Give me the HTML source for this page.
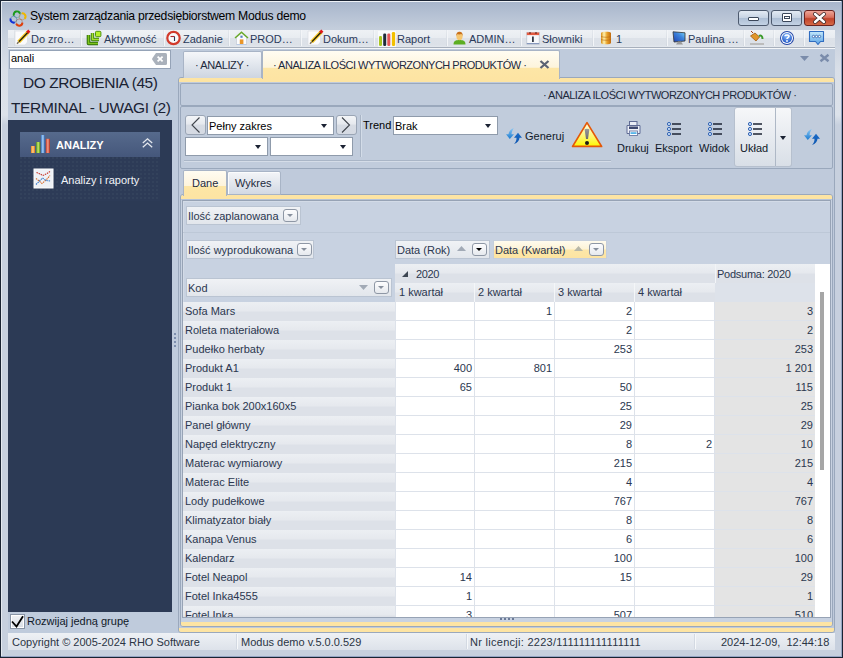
<!DOCTYPE html>
<html><head><meta charset="utf-8">
<style>
*{margin:0;padding:0;box-sizing:border-box}
html,body{width:843px;height:658px;overflow:hidden}
body{position:relative;background:#c3cfdf;font-family:"Liberation Sans",sans-serif;font-size:11px;color:#1e2a3c}
.a{position:absolute}
.t{position:absolute;white-space:nowrap;line-height:1}
svg{position:absolute;overflow:visible}
.rh{left:0;width:212px;height:19px;background:linear-gradient(#eceff3,#e6e9ee 45%,#dde1e8 55%,#dde1e8)}
.gt{color:#2b374f}
.tb{color:#2b3a5a}
.cb{position:absolute;background:#fff;border:1px solid #8f9bab}
.arr{position:absolute;width:0;height:0;border-left:3.5px solid transparent;border-right:3.5px solid transparent;border-top:4px solid #1b2233}
.nb{position:absolute;width:21px;height:20px;border:1px solid #9aa5b5;border-radius:3px;background:linear-gradient(#f3f5f8,#e6e9ee 45%,#d7dce4 50%,#d5dae3)}

.fb{position:absolute;height:19px;background:linear-gradient(#f0f2f5,#e2e6ec);border:1px solid #bac4d2}
.fbtn{position:absolute;width:15px;height:13px;border:1px solid #8e97a5;border-radius:3px;background:linear-gradient(#fdfdfe,#e6e9ee)}
.dk:after{border-top-color:#000 !important}
.fbtn:after{content:"";position:absolute;left:3px;top:4px;border-left:3.5px solid transparent;border-right:3.5px solid transparent;border-top:3.5px solid #87909d}


</style></head><body>
<!-- window frame -->
<div class="a" style="left:0;top:0;width:843px;height:658px;background:linear-gradient(#a7b5cb 0,#c4cedc 28px,#d9dfe8 68px,#dce2ea 114px,#c7d0de 124px,#c7d0de 100%);border:1px solid #1a2332"></div>
<div class="a" style="left:841px;top:1px;width:1px;height:656px;background:#95a5c4"></div>
<div class="a" style="left:1px;top:656px;width:841px;height:1px;background:#95a5c4"></div>
<div class="a" style="left:1px;top:1px;width:840px;height:1px;background:#eef2f7"></div>
<div class="a" style="left:1px;top:1px;width:1px;height:655px;background:#e4e9f0"></div>

<!-- title -->
<div class="t" style="left:30px;top:10.3px;font-size:12.2px;letter-spacing:-0.27px;color:#000">System zarządzania przedsiębiorstwem Modus demo</div>

<!-- toolbar -->
<div class="a" style="left:8px;top:30px;width:827px;height:17px;background:linear-gradient(#eef1f5 0,#e8ecf1 47%,#dde2e9 49%,#dce1e8 88%,#e4e8ee 100%)"></div>
<div class="a" style="left:8px;top:47px;width:827px;height:1px;background:#a8b0bc"></div>
<div class="a" style="left:8px;top:48px;width:827px;height:1px;background:#f4f6f9"></div>

<!-- logo -->
<svg style="left:8px;top:8px" width="20" height="20" viewBox="0 0 20 20">
<circle cx="9" cy="6.6" r="3.2" fill="none" stroke="#3a9a7a" stroke-width="0.7" opacity="0.6"/>
<circle cx="14.3" cy="8.6" r="3.2" fill="none" stroke="#b07a30" stroke-width="0.7" opacity="0.6"/>
<circle cx="11.2" cy="14.2" r="3.2" fill="none" stroke="#a05030" stroke-width="0.7" opacity="0.6"/>
<circle cx="5.6" cy="11.4" r="3.2" fill="none" stroke="#2a6a9a" stroke-width="0.7" opacity="0.6"/>
<path d="M5.9 7.6A3.2 3.2 0 0 1 12 5.6" fill="none" stroke="#1a9a1a" stroke-width="2"/>
<path d="M13.8 5.4A3.2 3.2 0 0 1 16.6 10.8" fill="none" stroke="#f0b800" stroke-width="2"/>
<path d="M14.4 14.6A3.2 3.2 0 0 1 8.2 15.6" fill="none" stroke="#e0400c" stroke-width="2"/>
<path d="M6.8 14.4A3.2 3.2 0 0 1 2.6 10.6" fill="none" stroke="#1030d8" stroke-width="2"/>
</svg>
<!-- window buttons -->
<div class="a" style="left:738px;top:10px;width:31px;height:16px;border:1px solid #4d5a6e;border-radius:3px;background:linear-gradient(#e3eaf3,#c6d3e3 50%,#aebfd5 52%,#c3d2e4)"></div>
<div class="a" style="left:748px;top:17px;width:11px;height:4px;background:#fff;border:1px solid #3b475a;border-radius:1px"></div>
<div class="a" style="left:771px;top:10px;width:31px;height:16px;border:1px solid #4d5a6e;border-radius:3px;background:linear-gradient(#e3eaf3,#c6d3e3 50%,#aebfd5 52%,#c3d2e4)"></div>
<div class="a" style="left:782px;top:13px;width:10px;height:9px;background:#fff;border:1px solid #3b475a;border-radius:1px"></div>
<div class="a" style="left:784px;top:16px;width:6px;height:3px;border:1px solid #3b475a"></div>
<div class="a" style="left:804px;top:10px;width:31px;height:16px;border:1px solid #6b2320;border-radius:3px;background:linear-gradient(#eea598,#d9705e 45%,#c0432c 55%,#d66a47)"></div>
<svg style="left:812px;top:12px" width="15" height="12" viewBox="0 0 15 12"><path d="M3 2L12 10M12 2L3 10" stroke="#3a2a2a" stroke-width="4" stroke-linecap="round"/><path d="M3 2L12 10M12 2L3 10" stroke="#fff" stroke-width="2.4" stroke-linecap="round"/></svg>

<!-- toolbar separators -->
<div class="a" style="left:14px;top:30px;width:1px;height:16px;background:linear-gradient(#e4e8ed,#d2d8e0)"></div>
<div class="a" style="left:80px;top:30px;width:1px;height:16px;background:linear-gradient(#e4e8ed,#d2d8e0)"></div><div class="a" style="left:81px;top:30px;width:1px;height:16px;background:#f3f5f8"></div>
<div class="a" style="left:163px;top:30px;width:1px;height:16px;background:linear-gradient(#e4e8ed,#d2d8e0)"></div><div class="a" style="left:164px;top:30px;width:1px;height:16px;background:#f3f5f8"></div>
<div class="a" style="left:228px;top:30px;width:1px;height:16px;background:linear-gradient(#e4e8ed,#d2d8e0)"></div><div class="a" style="left:229px;top:30px;width:1px;height:16px;background:#f3f5f8"></div>
<div class="a" style="left:300px;top:30px;width:1px;height:16px;background:linear-gradient(#e4e8ed,#d2d8e0)"></div><div class="a" style="left:301px;top:30px;width:1px;height:16px;background:#f3f5f8"></div>
<div class="a" style="left:373px;top:30px;width:1px;height:16px;background:linear-gradient(#e4e8ed,#d2d8e0)"></div><div class="a" style="left:374px;top:30px;width:1px;height:16px;background:#f3f5f8"></div>
<div class="a" style="left:446px;top:30px;width:1px;height:16px;background:linear-gradient(#e4e8ed,#d2d8e0)"></div><div class="a" style="left:447px;top:30px;width:1px;height:16px;background:#f3f5f8"></div>
<div class="a" style="left:520px;top:30px;width:1px;height:16px;background:linear-gradient(#e4e8ed,#d2d8e0)"></div><div class="a" style="left:521px;top:30px;width:1px;height:16px;background:#f3f5f8"></div>
<div class="a" style="left:592px;top:30px;width:1px;height:16px;background:linear-gradient(#e4e8ed,#d2d8e0)"></div><div class="a" style="left:593px;top:30px;width:1px;height:16px;background:#f3f5f8"></div>
<div class="a" style="left:666px;top:30px;width:1px;height:16px;background:linear-gradient(#e4e8ed,#d2d8e0)"></div><div class="a" style="left:667px;top:30px;width:1px;height:16px;background:#f3f5f8"></div>
<div class="a" style="left:743px;top:30px;width:1px;height:16px;background:linear-gradient(#e4e8ed,#d2d8e0)"></div><div class="a" style="left:744px;top:30px;width:1px;height:16px;background:#f3f5f8"></div>
<div class="a" style="left:773px;top:30px;width:1px;height:16px;background:linear-gradient(#e4e8ed,#d2d8e0)"></div><div class="a" style="left:774px;top:30px;width:1px;height:16px;background:#f3f5f8"></div>
<div class="a" style="left:803px;top:30px;width:1px;height:16px;background:linear-gradient(#e4e8ed,#d2d8e0)"></div><div class="a" style="left:804px;top:30px;width:1px;height:16px;background:#f3f5f8"></div>

<div class="t tb" style="left:31px;top:34px">Do zro…</div>
<div class="t tb" style="left:104px;top:34px">Aktywność</div>
<div class="t tb" style="left:183px;top:34px">Zadanie</div>
<div class="t tb" style="left:250px;top:34px">PROD…</div>
<div class="t tb" style="left:323px;top:34px">Dokum…</div>
<div class="t tb" style="left:397px;top:34px">Raport</div>
<div class="t tb" style="left:469px;top:34px">ADMIN…</div>
<div class="t tb" style="left:542px;top:34px">Słowniki</div>
<div class="t tb" style="left:616px;top:34px">1</div>
<div class="t tb" style="left:688px;top:34px">Paulina …</div>
<!-- toolbar icons -->
<svg style="left:14px;top:29px" width="16" height="16" viewBox="0 0 16 16">
<path d="M1 2H13.5V13L11 16H1Z" fill="#fbfbfc" stroke="#dadde2" stroke-width="0.7"/>
<path d="M4.6 13L14.2 3" stroke="#f5c623" stroke-width="3.6"/>
<path d="M5 12.6L14 3.2" stroke="#1a1a10" stroke-width="1.3"/>
<path d="M13.2 3.7L15.4 1.6" stroke="#e01818" stroke-width="3"/>
<path d="M3 14.8L4.6 13" stroke="#7a7060" stroke-width="1.5"/>
</svg>
<svg style="left:86px;top:31px" width="16" height="15" viewBox="0 0 16 15">
<path d="M2.5 4V12.5H12" fill="none" stroke="#2f6e0a" stroke-width="3.6" stroke-linejoin="round"/>
<path d="M2.5 4V12.5H12" fill="none" stroke="#7ec41c" stroke-width="1.6"/>
<path d="M6.5 2V8.5H13" fill="none" stroke="#3d8010" stroke-width="3.4" stroke-linejoin="round"/>
<path d="M6.5 2V8.5H13" fill="none" stroke="#a6e030" stroke-width="1.5"/>
<rect x="9.5" y="0.3" width="5.4" height="5.4" rx="1" fill="#b6ef2a" stroke="#4d8e12" stroke-width="1"/>
</svg>
<svg style="left:166px;top:31px" width="15" height="15" viewBox="0 0 15 15">
<circle cx="7.5" cy="7" r="6.2" fill="#f7f9fb" stroke="#d23a2c" stroke-width="2.2"/>
<path d="M4.5 5.5H8.5" stroke="#b0242a" stroke-width="1.1"/><path d="M8.5 5.5V10" stroke="#2c3550" stroke-width="1.1"/>
</svg>
<svg style="left:234px;top:31px" width="15" height="15" viewBox="0 0 15 15">
<path d="M2.5 6.5V13.5H12.5V6.5L7.5 2Z" fill="#fbfcfe" stroke="#c9cdd6" stroke-width="0.8"/>
<path d="M1 7L7.5 1.2L14 7" fill="none" stroke="#6aaa2a" stroke-width="1.5"/>
<rect x="5.8" y="8.4" width="3.6" height="5.2" fill="#e9962a"/>
<rect x="6.4" y="4.6" width="2.2" height="2.2" fill="#5a7fc0"/>
<path d="M2.5 13.5H12.5" stroke="#b9cbe6" stroke-width="1"/>
</svg>
<svg style="left:307px;top:29px" width="16" height="16" viewBox="0 0 16 16">
<path d="M1 2H13.5V13L11 16H1Z" fill="#fbfbfc" stroke="#dadde2" stroke-width="0.7"/>
<path d="M4.6 13L14.2 3" stroke="#f5c623" stroke-width="3.6"/>
<path d="M5 12.6L14 3.2" stroke="#1a1a10" stroke-width="1.3"/>
<path d="M13.2 3.7L15.4 1.6" stroke="#e01818" stroke-width="3"/>
<path d="M3 14.8L4.6 13" stroke="#7a7060" stroke-width="1.5"/>
</svg>
<svg style="left:378px;top:31px" width="18" height="16" viewBox="0 0 18 16">
<rect x="0" y="0" width="18" height="16" fill="#fff" opacity="0.7"/>
<rect x="1" y="5" width="3" height="10" rx="1.2" fill="#a9c620"/>
<rect x="5.2" y="2.5" width="3" height="12.5" rx="1.2" fill="#1f2b3a"/>
<rect x="9.3" y="2.5" width="3" height="12.5" rx="1.2" fill="#e5575a"/>
<rect x="13.9" y="1" width="3.2" height="14" rx="1.2" fill="#f2c000"/>
</svg>
<svg style="left:452px;top:31px" width="15" height="15" viewBox="0 0 15 15">
<path d="M1.5 13.5C1.5 9.5 4.5 9 7.5 9S13.5 9.5 13.5 13.5Z" fill="#5cae22"/>
<ellipse cx="7.5" cy="5.3" rx="3.1" ry="4" fill="#f6c771"/>
<path d="M4.4 5C4.2 1.5 6 0.8 7.5 0.8S10.8 1.5 10.6 5L9.5 3C8 3.5 6 3.5 5.5 3Z" fill="#c8701c"/>
</svg>
<svg style="left:526px;top:31px" width="14" height="14" viewBox="0 0 14 14">
<rect x="0.8" y="1.5" width="12.4" height="11.7" fill="#f6f8fb" stroke="#b8c0cc" stroke-width="0.7"/>
<rect x="0.8" y="1.5" width="12.4" height="2.6" fill="#e35a40"/>
<path d="M4 1V3M10 1V3" stroke="#6a2a20" stroke-width="1.2"/>
<rect x="6" y="5.5" width="1.8" height="5.5" fill="#333b48"/>
<path d="M0.8 12.6H13.2" stroke="#7b8fb8" stroke-width="1"/>
</svg>
<svg style="left:600px;top:31px" width="12" height="14" viewBox="0 0 12 14">
<defs><linearGradient id="gold" x1="0" x2="1"><stop offset="0" stop-color="#d58a12"/><stop offset="0.3" stop-color="#fff3b0"/><stop offset="0.6" stop-color="#e9a22a"/><stop offset="1" stop-color="#c06a10"/></linearGradient></defs>
<path d="M1 2C1 0.3 11 0.3 11 2V12C11 13.8 1 13.8 1 12Z" fill="url(#gold)"/>
<path d="M1 5.5C4 6.5 8 6.5 11 5.5M1 8.5C4 9.5 8 9.5 11 8.5" stroke="#b86a10" stroke-width="0.6" fill="none"/>
</svg>
<svg style="left:672px;top:31px" width="14" height="14" viewBox="0 0 14 14">
<defs><linearGradient id="scr" x1="0" y1="1" x2="1" y2="0"><stop offset="0" stop-color="#1e3fb0"/><stop offset="0.6" stop-color="#3f86dd"/><stop offset="1" stop-color="#7fd8f8"/></linearGradient></defs>
<path d="M1 0.8L13 1.8V10L2 11Z" fill="url(#scr)" stroke="#333" stroke-width="0.8"/>
<path d="M4 13.5L6 10.5H9L11 13.5Z" fill="#9a9a9a"/>
</svg>
<svg style="left:749px;top:31px" width="16" height="14" viewBox="0 0 16 14">
<path d="M1.5 5L6 2L10.5 6L7 10Z" fill="#e0962a" stroke="#a35a12" stroke-width="0.8"/>
<path d="M4 2L2 0" stroke="#a33a12" stroke-width="1"/>
<path d="M10 5C12 4 13.5 5 13.5 8" stroke="#3a9a2a" stroke-width="2" fill="none"/>
<rect x="1" y="12" width="14" height="2" fill="#bcbcbc"/>
</svg>
<svg style="left:779px;top:30px" width="16" height="16" viewBox="0 0 16 16">
<defs><radialGradient id="hb" cx="0.5" cy="0.3" r="0.7"><stop offset="0" stop-color="#8fc0ff"/><stop offset="1" stop-color="#1f55c4"/></radialGradient></defs>
<circle cx="8" cy="8" r="7" fill="#2346a8"/>
<circle cx="8" cy="8" r="6" fill="#fff"/>
<circle cx="8" cy="8" r="5" fill="url(#hb)"/>
<path d="M6 6.2C6 4.6 10 4.6 10 6.3C10 7.6 8 7.6 8 9" stroke="#fff" stroke-width="1.6" fill="none"/>
<circle cx="8" cy="11" r="0.9" fill="#fff"/>
</svg>
<svg style="left:808px;top:30px" width="17" height="16" viewBox="0 0 17 16">
<defs><linearGradient id="cg" x1="0" y1="0" x2="0" y2="1"><stop offset="0" stop-color="#c4e8fb"/><stop offset="1" stop-color="#5aa4e6"/></linearGradient></defs>
<path d="M1.5 1.5H15.5V11.5H12.5L10 14.5L7.5 11.5H1.5Z" fill="url(#cg)" stroke="#2f6cc0" stroke-width="1.1" stroke-linejoin="round"/>
<circle cx="5.5" cy="6.5" r="1.2" fill="#fff" stroke="#2a5ca8" stroke-width="0.8"/>
<circle cx="8.5" cy="6.5" r="1.2" fill="#fff" stroke="#2a5ca8" stroke-width="0.8"/>
<circle cx="11.5" cy="6.5" r="1.2" fill="#fff" stroke="#2a5ca8" stroke-width="0.8"/>
</svg>
<!-- body bg -->
<div class="a" style="left:8px;top:49px;width:827px;height:584px;background:#bfcbdc"></div>

<!-- LEFT PANEL -->
<div class="a" style="left:9px;top:50px;width:162px;height:19px;background:#fff;border:1px solid #95a3b7"></div>
<div class="t" style="left:11px;top:53px;color:#000">anali</div>
<svg style="left:152px;top:53px" width="15" height="12" viewBox="0 0 15 12"><path d="M4 0H13.5Q15 0 15 1.5V10.5Q15 12 13.5 12H4L0.3 6.8Q0 6 0.3 5.2Z" fill="#aab1bb"/><path d="M5.6 3.6L10.6 8.4M10.6 3.6L5.6 8.4" stroke="#fff" stroke-width="1.8"/></svg>
<div class="t" style="left:23px;top:75px;font-size:15.5px;letter-spacing:-0.45px;color:#1a2233">DO ZROBIENIA (45)</div>
<div class="t" style="left:11px;top:100px;font-size:15.5px;letter-spacing:-0.36px;color:#1a2233">TERMINAL - UWAGI (2)</div>

<div class="a" style="left:8px;top:120px;width:164px;height:492px;background:#2c3a55"></div>
<div class="a" style="left:20px;top:132px;width:140px;height:25px;background:linear-gradient(#566a8c,#45577b)"></div>
<svg style="left:30px;top:134px" width="21" height="20" viewBox="0 0 21 20">
<defs>
<linearGradient id="bo" x1="0" x2="1"><stop offset="0" stop-color="#e8851c"/><stop offset="0.5" stop-color="#ffd08a"/><stop offset="1" stop-color="#d9700e"/></linearGradient>
<linearGradient id="bg" x1="0" x2="1"><stop offset="0" stop-color="#5f9e14"/><stop offset="0.5" stop-color="#c9ea6e"/><stop offset="1" stop-color="#4f8c0c"/></linearGradient>
<linearGradient id="bb" x1="0" x2="1"><stop offset="0" stop-color="#3c74c4"/><stop offset="0.5" stop-color="#a8d4f8"/><stop offset="1" stop-color="#2f5fb0"/></linearGradient>
<linearGradient id="br" x1="0" x2="1"><stop offset="0" stop-color="#c83a2a"/><stop offset="0.5" stop-color="#f5a08a"/><stop offset="1" stop-color="#b02a1a"/></linearGradient>
</defs>
<rect x="1" y="12" width="4" height="7" fill="url(#bo)"/>
<rect x="6.2" y="8" width="4" height="11" fill="url(#bg)"/>
<rect x="11" y="1" width="3.8" height="18" fill="url(#bb)"/>
<rect x="15.9" y="4.8" width="4" height="14.2" fill="url(#br)"/>
</svg>
<div class="t" style="left:56px;top:140px;font-weight:bold;color:#fff;font-size:11px">ANALIZY</div>
<svg style="left:142px;top:138px" width="11" height="10" viewBox="0 0 11 10"><path d="M0.8 5L5.5 0.8L10.2 5M0.8 9.2L5.5 5L10.2 9.2" fill="none" stroke="#e4e8ee" stroke-width="1.3"/></svg>
<div class="a" style="left:20px;top:157px;width:140px;height:44px;background-color:#2d3b57;background-image:radial-gradient(circle at 1px 1px,#33425c 0.8px,transparent 1px);background-size:4px 4px"></div>
<svg style="left:33px;top:168px" width="22" height="22" viewBox="0 0 22 22">
<rect x="0.5" y="0.5" width="20" height="20" fill="#fdfdfe"/>
<rect x="1.5" y="1.5" width="18" height="18" fill="#eef1f6"/>
<path d="M3.5 4.5L6 5.5L10 7.5L14 5.5L17 3.5" fill="none" stroke="#c8352a" stroke-width="1.1" stroke-dasharray="1.5 0.8"/>
<path d="M3 10.5L5.5 12.5L9 15.5L13.5 11.5L17 7.5" fill="none" stroke="#d86a28" stroke-width="1.1" stroke-dasharray="1.5 0.8"/>
<path d="M3 16.5L6 13.5L9.5 10L13 12.5L17.5 13" fill="none" stroke="#3478c8" stroke-width="1.1" stroke-dasharray="1.5 0.8"/>
</svg>
<div class="t" style="left:61px;top:175px;color:#f0f3f8">Analizy i raporty</div>

<div class="a" style="left:10px;top:614px;width:15px;height:15px;background:linear-gradient(#f0f2f5,#d8dde5);border:1px solid #8894a6;box-shadow:inset 0 0 0 1px #fff"></div>
<svg style="left:10px;top:614px" width="15" height="15" viewBox="0 0 15 15"><path d="M2 7.5L6.5 12.5L13 2.3" fill="none" stroke="#000" stroke-width="1.8" stroke-linejoin="miter"/></svg>
<div class="t" style="left:27px;top:616px;color:#0f1828">Rozwijaj jedną grupę</div>

<!-- outer tab frame -->
<div class="a" style="left:178px;top:77px;width:657px;height:556px;background:#bfcadb;border:1px solid #9aa8bc;border-radius:3px"></div>
<div class="a" style="left:179px;top:78px;width:655px;height:4px;background:#fde4a3;border-radius:2px 2px 0 0"></div>
<div class="a" style="left:179px;top:628px;width:655px;height:4px;background:#fde4a3;border-radius:0 0 2px 2px"></div>
<!-- RIGHT TABS -->
<div class="a" style="left:183px;top:51px;width:79px;height:27px;background:linear-gradient(#f5f7fa,#cdd5e0);border:1px solid #a8b4c6;border-bottom:none;border-radius:2px 2px 0 0"></div>
<div class="t" style="left:195px;top:60px;color:#1e2a3c;letter-spacing:-0.4px">· ANALIZY ·</div>
<div class="a" style="left:262px;top:50px;width:298px;height:29px;background:linear-gradient(#fffcf2,#fdf4dc 58%,#fde6a6 62%,#fde4a3);border:1px solid #a8b4c6;border-bottom:none;border-radius:2px 2px 0 0"></div>
<div class="t" style="left:273px;top:60px;color:#1e2a3c;letter-spacing:-0.5px">· ANALIZA ILOŚCI WYTWORZONYCH PRODUKTÓW ·</div>
<svg style="left:539px;top:60px" width="11" height="9" viewBox="0 0 11 9"><path d="M1.5 1L9.5 8M9.5 1L1.5 8" stroke="#5b6373" stroke-width="2.3"/></svg>
<svg style="left:800px;top:56px" width="9" height="5"><path d="M0 0H9L4.5 5Z" fill="#7a8cab"/></svg>
<svg style="left:819px;top:54px" width="11" height="8" viewBox="0 0 11 8"><path d="M1.5 0.8L9.5 7.2M9.5 0.8L1.5 7.2" stroke="#7a8cab" stroke-width="2.4"/></svg>





<!-- header panel -->
<div class="a" style="left:180px;top:83px;width:653px;height:23px;background:#c1ccdc;border:1px solid #9aa8bc;border-radius:2px"></div>

<div class="t" style="left:543px;top:90px;color:#1e2a3c;letter-spacing:-0.5px">· ANALIZA ILOŚCI WYTWORZONYCH PRODUKTÓW ·</div>

<!-- toolbar panel -->
<div class="a" style="left:180px;top:106px;width:653px;height:63px;background:#c1ccdc;border:1px solid #9aa8bc;border-radius:2px"></div>


<!-- analysis toolbar widgets -->
<div class="nb" style="left:185px;top:115px"></div>
<svg style="left:190px;top:116px" width="12" height="18"><path d="M9.5 1.5L2 9L9.5 16.5" fill="none" stroke="#40454c" stroke-width="1.1"/></svg>
<div class="cb" style="left:207px;top:116px;width:127px;height:19px"></div>
<div class="t gt" style="left:209px;top:121px;color:#000">Pełny zakres</div>
<div class="arr" style="left:321px;top:124px"></div>
<div class="nb" style="left:336px;top:115px"></div>
<svg style="left:340px;top:116px" width="12" height="18"><path d="M2 1.5L9.5 9L2 16.5" fill="none" stroke="#40454c" stroke-width="1.1"/></svg>
<div class="cb" style="left:185px;top:137px;width:83px;height:19px"></div>
<div class="arr" style="left:255px;top:145px"></div>
<div class="cb" style="left:270px;top:137px;width:83px;height:19px"></div>
<div class="arr" style="left:340px;top:145px"></div>
<div class="a" style="left:360px;top:115px;width:1px;height:42px;background:#a9b5c6"></div>
<div class="a" style="left:361px;top:115px;width:1px;height:42px;background:#d3dce8"></div>
<div class="t gt" style="left:363px;top:120px;color:#000">Trend</div>
<div class="cb" style="left:393px;top:116px;width:105px;height:19px"></div>
<div class="t gt" style="left:395px;top:121px;color:#000">Brak</div>
<div class="arr" style="left:485px;top:124px"></div>
<div class="a" style="left:184px;top:160px;width:427px;height:1px;background:#aab6c7"></div>
<div class="a" style="left:184px;top:161px;width:427px;height:1px;background:#d5dde8"></div>

<svg style="left:502px;top:124px" width="24" height="24" viewBox="0 0 24 24">
<defs><linearGradient id="rl502" x1="0" y1="0" x2="0" y2="1"><stop offset="0" stop-color="#8cc8f4"/><stop offset="1" stop-color="#1a7ad0"/></linearGradient><linearGradient id="rr502" x1="0" y1="0" x2="0" y2="1"><stop offset="0" stop-color="#1a6cc8"/><stop offset="1" stop-color="#0d55b0"/></linearGradient></defs>
<path d="M11.8 4C9 5 7 7 6.5 10.2L4 10.2L7.8 15L12 10.2L9.5 10.2C9.8 8 10.5 6 11.8 4Z" fill="url(#rl502)"/>
<path d="M16 8.8L20 13.7L17.5 13.7C17.3 16.5 15.5 18.8 12 20C14 18 14.5 16 14.5 13.7L12 13.7Z" fill="url(#rr502)"/>
</svg>
<div class="t gt" style="left:525px;top:131px;color:#101828">Generuj</div>
<svg style="left:571px;top:121px" width="33" height="28" viewBox="0 0 33 28">
<defs><linearGradient id="wy" x1="0" y1="0" x2="0" y2="1"><stop offset="0" stop-color="#fffff0"/><stop offset="0.55" stop-color="#fdf77a"/><stop offset="1" stop-color="#fff800"/></linearGradient><linearGradient id="wx" x1="0" y1="0" x2="0" y2="1"><stop offset="0" stop-color="#9a9a9a"/><stop offset="1" stop-color="#6a6a70"/></linearGradient></defs>
<path d="M16 1.6L1.6 25.4H30.6Z" fill="url(#wy)" stroke="#e45808" stroke-width="1.7" stroke-linejoin="round"/>
<path d="M13.6 8.2Q16 7.4 18.4 8.2L17 18H15Z" fill="url(#wx)"/>
<circle cx="16" cy="22" r="2" fill="#1a1a1a"/>
</svg>

<svg style="left:626px;top:121px" width="15" height="15" viewBox="0 0 15 15">
<rect x="3.5" y="0.5" width="7.5" height="7" fill="#e9edf6" stroke="#5f6b95" stroke-width="1"/>
<path d="M1 4.5H14V12.5H1Z" fill="#eef1f8" stroke="#5f6b95" stroke-width="1" stroke-linejoin="round"/>
<rect x="3" y="5.5" width="9" height="2.5" fill="#3d4870"/>
<rect x="3.5" y="10" width="8" height="4.5" fill="#fff" stroke="#6c78a0" stroke-width="0.9"/>
<rect x="4.5" y="11.2" width="6" height="1.8" fill="#55b5ea"/>
</svg>
<svg style="left:667px;top:122px" width="15" height="14" viewBox="0 0 15 14">
<circle cx="2" cy="2" r="1.6" fill="#c5dcf5" stroke="#3565b5" stroke-width="1"/><circle cx="2" cy="7" r="1.6" fill="#c5dcf5" stroke="#3565b5" stroke-width="1"/><circle cx="2" cy="12" r="1.6" fill="#c5dcf5" stroke="#3565b5" stroke-width="1"/>
<path d="M5 2H14M5 7H14M5 12H14" stroke="#1c2333" stroke-width="1.5"/></svg>
<svg style="left:708px;top:122px" width="15" height="14" viewBox="0 0 15 14">
<circle cx="2" cy="2" r="1.6" fill="#c5dcf5" stroke="#3565b5" stroke-width="1"/><circle cx="2" cy="7" r="1.6" fill="#c5dcf5" stroke="#3565b5" stroke-width="1"/><circle cx="2" cy="12" r="1.6" fill="#c5dcf5" stroke="#3565b5" stroke-width="1"/>
<path d="M5 2H14M5 7H14M5 12H14" stroke="#1c2333" stroke-width="1.5"/></svg>
<div class="t gt" style="left:617px;top:143px;color:#101828">Drukuj</div>
<div class="t gt" style="left:655px;top:143px;color:#101828">Eksport</div>
<div class="t gt" style="left:699px;top:143px;color:#101828">Widok</div>
<div class="a" style="left:734px;top:107px;width:42px;height:60px;border:1px solid #b6c0ce;border-radius:3px 0 0 3px;background:linear-gradient(#f6f7f9,#d9dfe7)"></div>
<div class="a" style="left:776px;top:107px;width:16px;height:60px;border:1px solid #b6c0ce;border-left:none;border-radius:0 3px 3px 0;background:linear-gradient(#f6f7f9,#d9dfe7)"></div>
<div class="a" style="left:775px;top:108px;width:1px;height:58px;background:#aeb8c6"></div>
<div class="arr" style="left:780px;top:136px"></div>
<svg style="left:748px;top:122px" width="15" height="14" viewBox="0 0 15 14">
<circle cx="2" cy="2" r="1.6" fill="#c5dcf5" stroke="#3565b5" stroke-width="1"/><circle cx="2" cy="7" r="1.6" fill="#c5dcf5" stroke="#3565b5" stroke-width="1"/><circle cx="2" cy="12" r="1.6" fill="#c5dcf5" stroke="#3565b5" stroke-width="1"/>
<path d="M5 2H14M5 7H14M5 12H14" stroke="#1c2333" stroke-width="1.5"/></svg>
<div class="t gt" style="left:740px;top:143px;color:#101828">Układ</div>
<svg style="left:800px;top:125px" width="24" height="24" viewBox="0 0 24 24">
<defs><linearGradient id="rl801" x1="0" y1="0" x2="0" y2="1"><stop offset="0" stop-color="#8cc8f4"/><stop offset="1" stop-color="#1a7ad0"/></linearGradient><linearGradient id="rr801" x1="0" y1="0" x2="0" y2="1"><stop offset="0" stop-color="#1a6cc8"/><stop offset="1" stop-color="#0d55b0"/></linearGradient></defs>
<path d="M11.8 4C9 5 7 7 6.5 10.2L4 10.2L7.8 15L12 10.2L9.5 10.2C9.8 8 10.5 6 11.8 4Z" fill="url(#rl801)"/>
<path d="M16 8.8L20 13.7L17.5 13.7C17.3 16.5 15.5 18.8 12 20C14 18 14.5 16 14.5 13.7L12 13.7Z" fill="url(#rr801)"/>
</svg>
<!-- inner tab frame -->
<div class="a" style="left:180px;top:194px;width:653px;height:433px;background:#c8d2e1;border:1px solid #9aa8bc;border-radius:3px"></div>
<div class="a" style="left:181px;top:195px;width:651px;height:4px;background:#fde4a3;border-radius:2px 2px 0 0"></div>
<div class="a" style="left:181px;top:199px;width:651px;height:1px;background:#b5c3d9"></div>
<div class="a" style="left:181px;top:622px;width:651px;height:4px;background:#fde4a3;border-radius:0 0 2px 2px"></div>



<div class="a" style="left:182px;top:200px;width:649px;height:418px;border:1px solid #97a3b5;box-shadow:inset 1px 1px 0 #d3dbe7"></div>
<!-- Dane / Wykres tabs -->
<div class="a" style="left:183px;top:170px;width:44px;height:26px;background:linear-gradient(#fffcf2,#fdf4dc 58%,#fde6a6 62%,#fde4a3);border:1px solid #a8b4c6;border-bottom:none;border-radius:2px 2px 0 0"></div>
<div class="t" style="left:192px;top:178px">Dane</div>
<div class="a" style="left:227px;top:171px;width:54px;height:24px;background:linear-gradient(#f3f5f8,#d2d9e3);border:1px solid #a8b4c6;border-radius:2px 2px 0 0;box-shadow:inset 1px 1px 0 #fbfcfd"></div>
<div class="t" style="left:235px;top:178px">Wykres</div>


<!-- grid panel -->




<!-- field boxes -->
<div class="fb" style="left:186px;top:206px;width:115px"></div>
<div class="t gt" style="left:188px;top:211px">Ilość zaplanowana</div>
<div class="fbtn" style="left:283px;top:209px"></div>
<div class="a" style="left:183px;top:232px;width:647px;height:1px;background:#bdc8d7"></div>
<div class="fb" style="left:186px;top:240px;width:128px"></div>
<div class="t gt" style="left:188px;top:245px">Ilość wyprodukowana</div>
<div class="fbtn" style="left:297px;top:243px"></div>
<div class="fb" style="left:186px;top:278px;width:206px;height:19px"></div>
<div class="t gt" style="left:188px;top:283px">Kod</div>
<svg style="left:359px;top:285px" width="9" height="5"><path d="M0 0H9L4.5 5Z" fill="#a2aab6"/></svg>
<div class="fbtn" style="left:374px;top:281px"></div>
<div class="fb" style="left:395px;top:240px;width:95px"></div>
<div class="t gt" style="left:397px;top:245px">Data (Rok)</div>
<svg style="left:457px;top:246px" width="9" height="5"><path d="M0 5H9L4.5 0Z" fill="#a2aab6"/></svg>
<div class="fbtn dk" style="left:472px;top:243px"></div>
<div class="fb" style="left:493px;top:240px;width:114px;background:linear-gradient(#fffbee,#fdf3d6 48%,#fde7a8 52%,#fde4a2);border-color:#c5cedb"></div>
<div class="t gt" style="left:495px;top:245px">Data (Kwartał)</div>
<svg style="left:574px;top:246px" width="9" height="5"><path d="M0 5H9L4.5 0Z" fill="#b7b7a8"/></svg>
<div class="fbtn" style="left:589px;top:243px"></div>
<!-- grid header -->
<div class="a" style="left:395px;top:264px;width:320px;height:19px;background:linear-gradient(#eceff3,#e6e9ee 45%,#dde1e8 55%,#dde1e8)"></div>
<div class="a" style="left:395px;top:283px;width:320px;height:19px;background:linear-gradient(#eceff3,#e6e9ee 45%,#dde1e8 55%,#dde1e8)"></div>
<div class="a" style="left:474px;top:283px;width:1px;height:19px;background:#f4f6f8"></div>
<div class="a" style="left:554px;top:283px;width:1px;height:19px;background:#f4f6f8"></div>
<div class="a" style="left:634px;top:283px;width:1px;height:19px;background:#f4f6f8"></div>
<div class="a" style="left:715px;top:264px;width:100px;box-shadow:inset 1px 0 0 #f2f4f7;height:19px;background:linear-gradient(#eceff3,#e6e9ee 45%,#dde1e8 55%,#dde1e8)"></div>
<div class="a" style="left:715px;top:283px;width:100px;height:19px;background:#dde2ea"></div>
<div class="a" style="left:815px;top:264px;width:15px;height:353px;background:#fff"></div>

<div class="t gt" style="left:416px;top:269px;letter-spacing:-0.4px">2020</div>
<div class="t gt" style="left:399px;top:287px">1 kwartał</div>
<div class="t gt" style="left:478px;top:287px">2 kwartał</div>
<div class="t gt" style="left:558px;top:287px">3 kwartał</div>
<div class="t gt" style="left:638px;top:287px">4 kwartał</div>
<div class="t gt" style="left:717px;top:269px;letter-spacing:-0.26px">Podsuma: 2020</div>
<svg style="left:402px;top:271px" width="6" height="6"><path d="M6 0V6H0Z" fill="#3d4652"/></svg>
<div class="a" style="left:183px;top:302px;width:647px;height:315px;overflow:hidden">
<div class="a" style="left:212px;top:0;width:435px;height:316px;background:#fff"></div>
<div class="a" style="left:531px;top:0;width:101px;height:316px;background:#e4e4e4"></div>
<div class="a rh" style="top:0px"></div>
<div class="t gt" style="left:2px;top:4px">Sofa Mars</div>
<div class="t gt" style="right:278px;top:4px">1</div>
<div class="t gt" style="right:198px;top:4px">2</div>
<div class="t gt" style="right:17px;top:4px">3</div>
<div class="a rh" style="top:19px"></div>
<div class="t gt" style="left:2px;top:23px">Roleta materiałowa</div>
<div class="t gt" style="right:198px;top:23px">2</div>
<div class="t gt" style="right:17px;top:23px">2</div>
<div class="a rh" style="top:38px"></div>
<div class="t gt" style="left:2px;top:42px">Pudełko herbaty</div>
<div class="t gt" style="right:198px;top:42px">253</div>
<div class="t gt" style="right:17px;top:42px">253</div>
<div class="a rh" style="top:57px"></div>
<div class="t gt" style="left:2px;top:61px">Produkt A1</div>
<div class="t gt" style="right:358px;top:61px">400</div>
<div class="t gt" style="right:278px;top:61px">801</div>
<div class="t gt" style="right:17px;top:61px">1 201</div>
<div class="a rh" style="top:76px"></div>
<div class="t gt" style="left:2px;top:80px">Produkt 1</div>
<div class="t gt" style="right:358px;top:80px">65</div>
<div class="t gt" style="right:198px;top:80px">50</div>
<div class="t gt" style="right:17px;top:80px">115</div>
<div class="a rh" style="top:95px"></div>
<div class="t gt" style="left:2px;top:99px">Pianka bok 200x160x5</div>
<div class="t gt" style="right:198px;top:99px">25</div>
<div class="t gt" style="right:17px;top:99px">25</div>
<div class="a rh" style="top:114px"></div>
<div class="t gt" style="left:2px;top:118px">Panel główny</div>
<div class="t gt" style="right:198px;top:118px">29</div>
<div class="t gt" style="right:17px;top:118px">29</div>
<div class="a rh" style="top:133px"></div>
<div class="t gt" style="left:2px;top:137px">Napęd elektryczny</div>
<div class="t gt" style="right:198px;top:137px">8</div>
<div class="t gt" style="right:118px;top:137px">2</div>
<div class="t gt" style="right:17px;top:137px">10</div>
<div class="a rh" style="top:152px"></div>
<div class="t gt" style="left:2px;top:156px">Materac wymiarowy</div>
<div class="t gt" style="right:198px;top:156px">215</div>
<div class="t gt" style="right:17px;top:156px">215</div>
<div class="a rh" style="top:171px"></div>
<div class="t gt" style="left:2px;top:175px">Materac Elite</div>
<div class="t gt" style="right:198px;top:175px">4</div>
<div class="t gt" style="right:17px;top:175px">4</div>
<div class="a rh" style="top:190px"></div>
<div class="t gt" style="left:2px;top:194px">Lody pudełkowe</div>
<div class="t gt" style="right:198px;top:194px">767</div>
<div class="t gt" style="right:17px;top:194px">767</div>
<div class="a rh" style="top:209px"></div>
<div class="t gt" style="left:2px;top:213px">Klimatyzator biały</div>
<div class="t gt" style="right:198px;top:213px">8</div>
<div class="t gt" style="right:17px;top:213px">8</div>
<div class="a rh" style="top:228px"></div>
<div class="t gt" style="left:2px;top:232px">Kanapa Venus</div>
<div class="t gt" style="right:198px;top:232px">6</div>
<div class="t gt" style="right:17px;top:232px">6</div>
<div class="a rh" style="top:247px"></div>
<div class="t gt" style="left:2px;top:251px">Kalendarz</div>
<div class="t gt" style="right:198px;top:251px">100</div>
<div class="t gt" style="right:17px;top:251px">100</div>
<div class="a rh" style="top:266px"></div>
<div class="t gt" style="left:2px;top:270px">Fotel Neapol</div>
<div class="t gt" style="right:358px;top:270px">14</div>
<div class="t gt" style="right:198px;top:270px">15</div>
<div class="t gt" style="right:17px;top:270px">29</div>
<div class="a rh" style="top:285px"></div>
<div class="t gt" style="left:2px;top:289px">Fotel Inka4555</div>
<div class="t gt" style="right:358px;top:289px">1</div>
<div class="t gt" style="right:17px;top:289px">1</div>
<div class="a rh" style="top:304px"></div>
<div class="t gt" style="left:2px;top:308px">Fotel Inka</div>
<div class="t gt" style="right:358px;top:308px">3</div>
<div class="t gt" style="right:198px;top:308px">507</div>
<div class="t gt" style="right:17px;top:308px">510</div>
<div class="a" style="left:212px;top:18px;width:420px;height:1px;background:#dde2ea"></div>
<div class="a" style="left:212px;top:37px;width:420px;height:1px;background:#dde2ea"></div>
<div class="a" style="left:212px;top:56px;width:420px;height:1px;background:#dde2ea"></div>
<div class="a" style="left:212px;top:75px;width:420px;height:1px;background:#dde2ea"></div>
<div class="a" style="left:212px;top:94px;width:420px;height:1px;background:#dde2ea"></div>
<div class="a" style="left:212px;top:113px;width:420px;height:1px;background:#dde2ea"></div>
<div class="a" style="left:212px;top:132px;width:420px;height:1px;background:#dde2ea"></div>
<div class="a" style="left:212px;top:151px;width:420px;height:1px;background:#dde2ea"></div>
<div class="a" style="left:212px;top:170px;width:420px;height:1px;background:#dde2ea"></div>
<div class="a" style="left:212px;top:189px;width:420px;height:1px;background:#dde2ea"></div>
<div class="a" style="left:212px;top:208px;width:420px;height:1px;background:#dde2ea"></div>
<div class="a" style="left:212px;top:227px;width:420px;height:1px;background:#dde2ea"></div>
<div class="a" style="left:212px;top:246px;width:420px;height:1px;background:#dde2ea"></div>
<div class="a" style="left:212px;top:265px;width:420px;height:1px;background:#dde2ea"></div>
<div class="a" style="left:212px;top:284px;width:420px;height:1px;background:#dde2ea"></div>
<div class="a" style="left:212px;top:303px;width:420px;height:1px;background:#dde2ea"></div>
<div class="a" style="left:212px;top:322px;width:420px;height:1px;background:#dde2ea"></div>
<div class="a" style="left:212px;top:0;width:1px;height:316px;background:#dde2ea"></div>
<div class="a" style="left:291px;top:0;width:1px;height:316px;background:#dde2ea"></div>
<div class="a" style="left:371px;top:0;width:1px;height:316px;background:#dde2ea"></div>
<div class="a" style="left:451px;top:0;width:1px;height:316px;background:#dde2ea"></div>
<div class="a" style="left:531px;top:0;width:1px;height:316px;background:#dde2ea"></div>
</div>
</div>
<div class="a" style="left:174px;top:333px;width:2px;height:2px;background:#7d8fae"></div><div class="a" style="left:500px;top:618px;width:2px;height:2px;background:#6b7a98"></div><div class="a" style="left:174px;top:337px;width:2px;height:2px;background:#7d8fae"></div><div class="a" style="left:504px;top:618px;width:2px;height:2px;background:#6b7a98"></div><div class="a" style="left:174px;top:341px;width:2px;height:2px;background:#7d8fae"></div><div class="a" style="left:508px;top:618px;width:2px;height:2px;background:#6b7a98"></div><div class="a" style="left:174px;top:345px;width:2px;height:2px;background:#7d8fae"></div><div class="a" style="left:512px;top:618px;width:2px;height:2px;background:#6b7a98"></div>
<div class="a" style="left:820px;top:292px;width:4px;height:178px;background:#a6a6a6"></div>
<!-- STATUS BAR -->
<div class="a" style="left:8px;top:633px;width:827px;height:17px;background:linear-gradient(#eef1f5,#dde2ea)"></div>
<div class="a" style="left:236px;top:634px;width:1px;height:15px;background:#d3d9e2"></div><div class="a" style="left:237px;top:634px;width:1px;height:15px;background:#f6f8fa"></div>
<div class="a" style="left:466px;top:634px;width:1px;height:15px;background:#d3d9e2"></div><div class="a" style="left:467px;top:634px;width:1px;height:15px;background:#f6f8fa"></div>
<div class="a" style="left:694px;top:634px;width:1px;height:15px;background:#d3d9e2"></div><div class="a" style="left:695px;top:634px;width:1px;height:15px;background:#f6f8fa"></div>
<div class="t" style="left:12px;top:637px;color:#2a3444">Copyright © 2005-2024 RHO Software</div>
<div class="t" style="left:241px;top:637px;color:#2a3444">Modus demo v.5.0.0.529</div>
<div class="t" style="left:470px;top:637px;color:#2a3444;letter-spacing:0.28px">Nr licencji: 2223/111111111111111</div>
<div class="t" style="left:721px;top:637px;color:#2a3444">2024-12-09,&nbsp; 12:44:18</div>
</body></html>
